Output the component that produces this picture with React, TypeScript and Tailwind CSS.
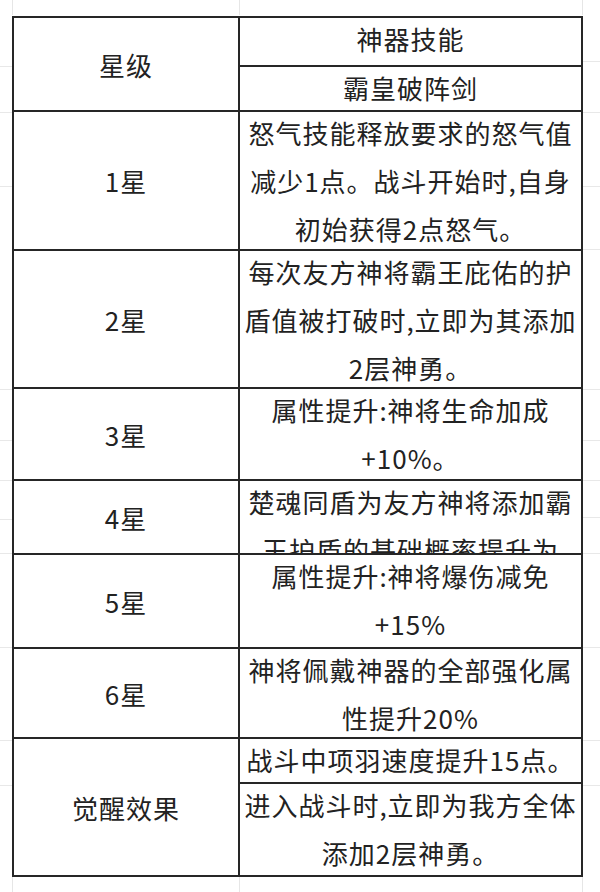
import React from "react";

const font = "font-['Noto_Sans_CJK_SC','Noto_Sans',sans-serif]";

function RightCell({ lines, className }: { lines: string[]; className: string }) {
  return (
    <div className={`flex flex-col items-center overflow-hidden ${className}`}>
      <div className="-mt-[3px] flex flex-col items-center">
        {lines.map((l, i) => (
          <div key={i} className="whitespace-nowrap leading-[48px]">
            {l}
          </div>
        ))}
      </div>
    </div>
  );
}

function Row({
  label,
  lines,
  h,
  last,
}: {
  label: string;
  lines: string[];
  h: string;
  last?: boolean;
}) {
  return (
    <div className={`flex ${h} ${last ? "" : "border-b-2 border-[#262626]"}`}>
      <div className="w-[226px] shrink-0 border-r-2 border-[#262626] flex items-center justify-center">
        {label}
      </div>
      <RightCell lines={lines} className="flex-1" />
    </div>
  );
}

function Strip({ className }: { className: string }) {
  return (
    <div className={`flex ${className}`}>
      <div className="w-[13px] border-r border-[#e6e6e6]" />
      <div className="w-[227px] border-r border-[#e6e6e6]" />
      <div className="w-[343px] border-r border-[#e6e6e6]" />
      <div className="flex-1" />
    </div>
  );
}

export default function App() {
  return (
    <div className={`w-[600px] h-[892px] bg-white flex flex-col overflow-hidden text-[#222] text-[26px] tracking-[1px] ${font}`}>
      <Strip className="h-[16px] border-b border-transparent" />
      <div className="flex">
        {/* left gutter */}
        <div className="w-[12px] flex flex-col">
          <div className="h-[51px] border-b border-[#e8e8e8]" />
          <div className="h-[46px] border-b border-[#e8e8e8]" />
          <div className="h-[74px] border-b border-[#e8e8e8]" />
          <div className="h-[203px] border-b border-[#e8e8e8]" />
          <div className="h-[51px] border-b border-[#e8e8e8]" />
          <div className="h-[40px] border-b border-[#e8e8e8]" />
          <div className="h-[39px] border-b border-[#e8e8e8]" />
          <div className="h-[34px] border-b border-[#e8e8e8]" />
          <div className="h-[94px] border-b border-[#e8e8e8]" />
          <div className="h-[93px] border-b border-[#e8e8e8]" />
          <div className="h-[45px] border-b border-[#e8e8e8]" />
        </div>

        {/* table */}
        <div className="w-[571px] shrink-0 border-2 border-[#262626] flex flex-col">
          <div className="flex h-[94px] border-b-2 border-[#262626]">
            <div className="w-[226px] shrink-0 border-r-2 border-[#262626] flex items-center justify-center">
              星级
            </div>
            <div className="flex-1 flex flex-col">
              <RightCell lines={["神器技能"]} className="h-[49px] border-b-2 border-[#262626]" />
              <RightCell lines={["霸皇破阵剑"]} className="flex-1" />
            </div>
          </div>
          <Row
            label="1星"
            h="h-[139px]"
            lines={["怒气技能释放要求的怒气值", "减少1点。战斗开始时,自身", "初始获得2点怒气。"]}
          />
          <Row
            label="2星"
            h="h-[138px]"
            lines={["每次友方神将霸王庇佑的护", "盾值被打破时,立即为其添加", "2层神勇。"]}
          />
          <Row label="3星" h="h-[92px]" lines={["属性提升:神将生命加成", "+10%。"]} />
          <Row
            label="4星"
            h="h-[74px]"
            lines={["楚魂同盾为友方神将添加霸", "王护盾的基础概率提升为"]}
          />
          <Row label="5星" h="h-[94px]" lines={["属性提升:神将爆伤减免", "+15%"]} />
          <Row label="6星" h="h-[90px]" lines={["神将佩戴神器的全部强化属", "性提升20%"]} />
          <div className="flex h-[136px]">
            <div className="w-[226px] shrink-0 border-r-2 border-[#262626] flex items-center justify-center">
              觉醒效果
            </div>
            <div className="flex-1 flex flex-col">
              <RightCell lines={["战斗中项羽速度提升15点。"]} className="h-[45px] border-b-2 border-[#262626]" />
              <RightCell lines={["进入战斗时,立即为我方全体", "添加2层神勇。"]} className="flex-1" />
            </div>
          </div>
        </div>

        {/* right gutter */}
        <div className="flex-1 flex flex-col">
          <div className="h-[1px]" />
          <div className="h-[45px] border-b border-[#e8e8e8]" />
          <div className="h-[51px] border-b border-[#e8e8e8]" />
          <div className="h-[74px] border-b border-[#e8e8e8]" />
          <div className="h-[63px] border-b border-[#e8e8e8]" />
          <div className="h-[140px] border-b border-[#e8e8e8]" />
          <div className="h-[51px] border-b border-[#e8e8e8]" />
          <div className="h-[40px] border-b border-[#e8e8e8]" />
          <div className="h-[37px] border-b border-[#e8e8e8]" />
          <div className="h-[36px] border-b border-[#e8e8e8]" />
          <div className="h-[94px] border-b border-[#e8e8e8]" />
          <div className="h-[93px] border-b border-[#e8e8e8]" />
          <div className="h-[45px] border-b border-[#e8e8e8]" />
        </div>
      </div>
      <Strip className="flex-1" />
    </div>
  );
}
